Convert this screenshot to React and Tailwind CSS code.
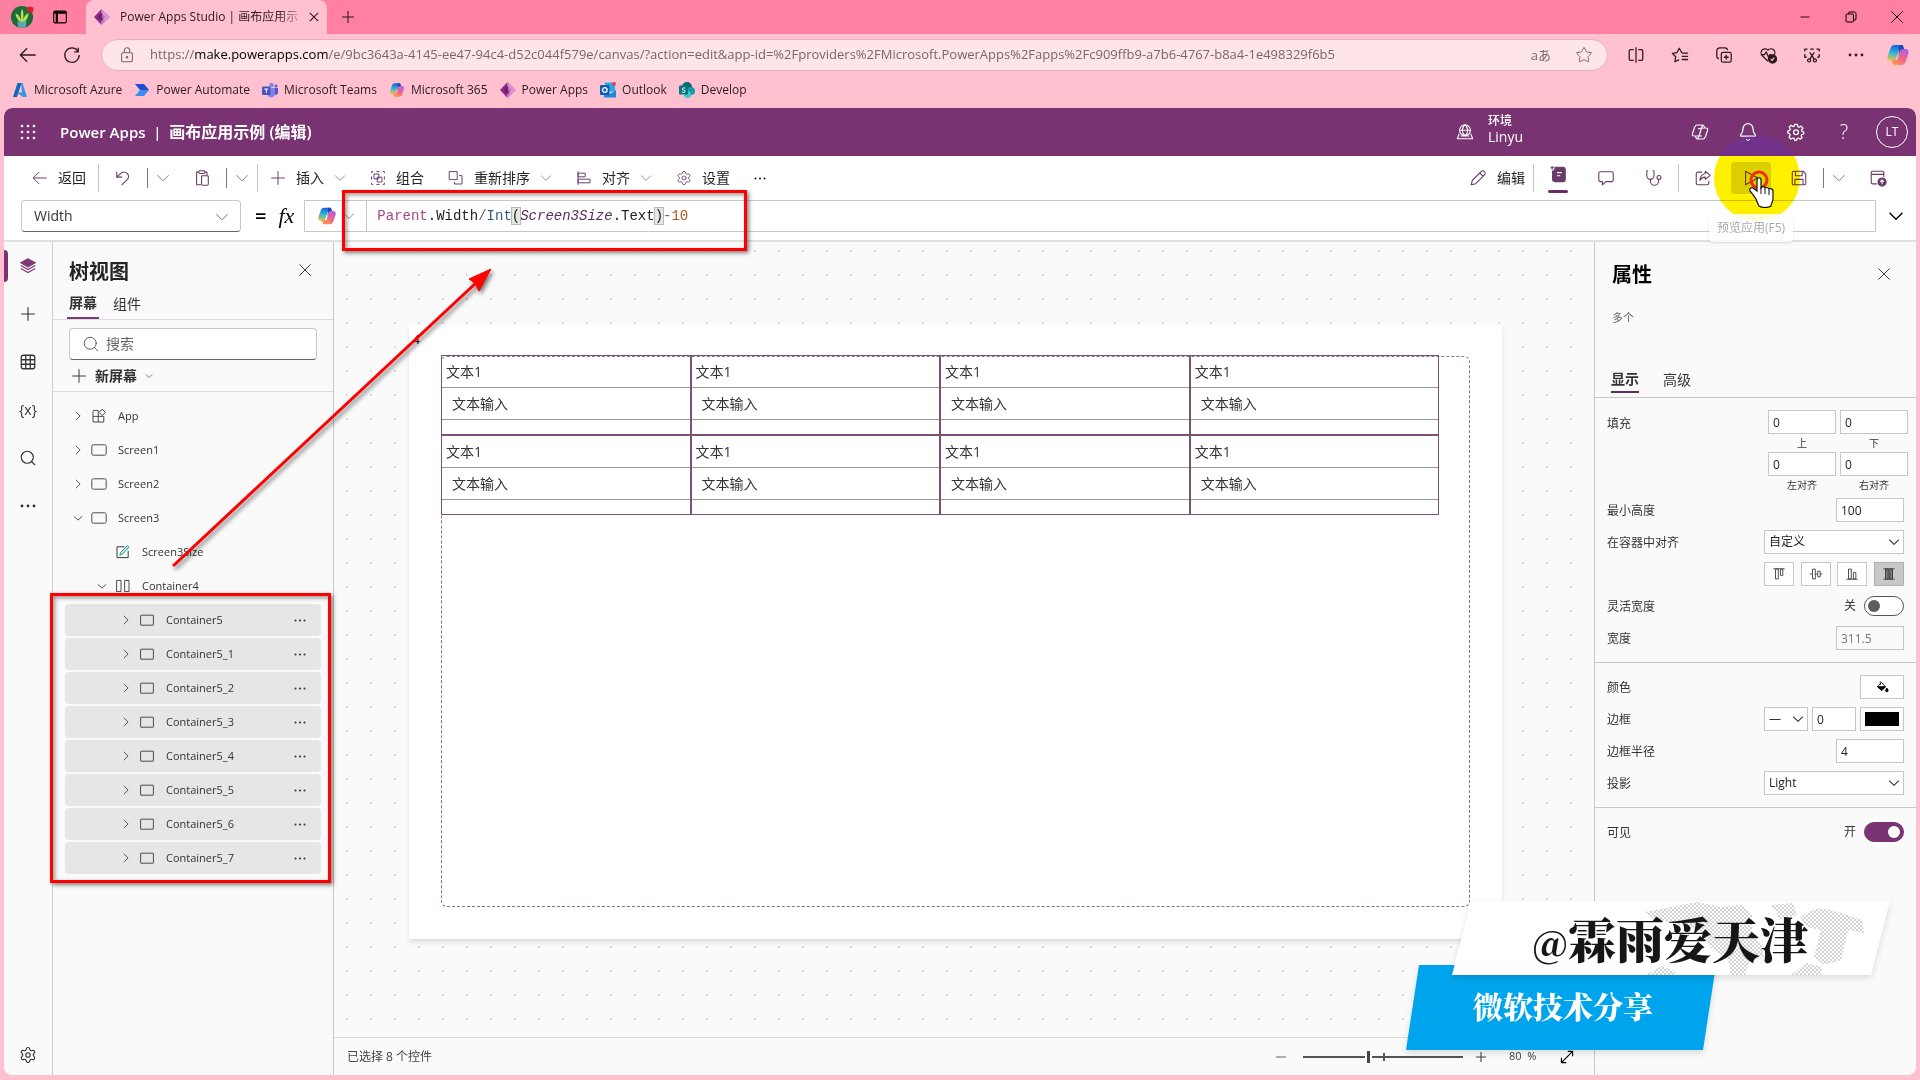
import { useState } from 'react';
import { Bell, Minus, Search, Settings, Star } from 'lucide-react';

const ICONS = {
  back: <path d="M18.500 10h-17M9 2.500 1.500 10 9 17.500" />,
  plus: <path d="M10 1.500v17M1.500 10h17" />,
  close: <path d="m3 3 14 14M17 3 3 17" />,
  down: <path d="m2 6 8 8 8-8" />,
  downSmall: <path d="m4 7.500 6 5.500 6-5.500" />,
  right: <path d="m7 4 6 6-6 6" />,
  tabs: <><rect x="3" y="3.500" width="14" height="13" rx="1.500" /><path d="M3.500 5h13M6.500 5v11" strokeWidth="2.500" /></>,
  reload: <path d="M16.500 5.500A8 8 0 1 0 18 10M17 2v4.500h-4.500" />,
  lock: <><rect x="4" y="7.500" width="12" height="10" rx="1.500" /><path d="M7 7.500V5a3 3 0 0 1 6 0v2.500" /><circle cx="10" cy="12.500" r="0.800" fill="currentColor" /></>,
  split: <path d="M7.500 4H4a1.500 1.500 0 0 0-1.500 1.500v9A1.500 1.500 0 0 0 4 16h3.500M12.500 4H16a1.500 1.500 0 0 1 1.500 1.500v9A1.500 1.500 0 0 1 16 16h-3.500M10 1.500v17" />,
  favorites: <path d="M12 7.500 9.200 2.500 6.500 7.300l-5 .8 3.700 3.900-.8 5.500L9 15.200M12 8h7M12 11.500h7M12 15h7" />,
  collections: <><rect x="7" y="7" width="11" height="11" rx="2" /><path d="M12.500 9.800v5.400M9.800 12.500h5.400M4.500 14A3 3 0 0 1 2 11V5.500A3.500 3.500 0 0 1 5.500 2H11a3 3 0 0 1 3 2.500" /></>,
  heart: <><path d="M10 17 3.500 10.500A4.300 4.300 0 0 1 10 4.500a4.300 4.300 0 0 1 6.500 6M2 9.500h4L8 6.500l2.500 6 1.500-3h2" /><circle cx="15" cy="14.500" r="4.500" fill="currentColor" /><path d="m13 14.500 1.500 1.500 2.500-3" stroke="#ffc0d0" /></>,
  snip: <><path d="M2 6V3.500h3M8 3.500h4M15 3.500h3V6M18 9v3.500M2 9v3.500h2M16 12.500h2M7.500 7l5 7.500M12.500 7l-5 7.500" /><circle cx="6.800" cy="16" r="1.700" /><circle cx="13.200" cy="16" r="1.700" /></>,
  undo: <path d="M3 3v6h6M3.500 8.500 8 4.500a5 5 0 0 1 7 7L8.500 18" />,
  paste: <><path d="M6.500 3.500H4v14h5M13 3.500h2.500V7" /><rect x="6.500" y="2" width="6.500" height="3" rx="1" /><rect x="9.500" y="7.500" width="7.500" height="10.500" rx="1" /></>,
  group: <><rect x="5" y="5" width="6" height="6" /><rect x="9" y="9" width="6" height="6" /><path d="M2 4V2h2M16 2h2v2M18 16v2h-2M4 18H2v-2M2 8v4M18 8v4M8 2h4M8 18h4" /></>,
  reorder: <><rect x="1.500" y="2" width="10" height="10" /><path d="M14 7h3.500v10.500H8V15" /></>,
  align: <><path d="M2.500 1.500v17" /><rect x="2.500" y="4" width="9" height="4.500" /><rect x="2.500" y="11.500" width="15" height="4.500" /></>,
  pencil: <path d="m2.500 17.500 1.200-5L13.500 2.800a2.500 2.500 0 0 1 3.700 3.700L7.500 16.300l-5 1.200ZM12 4.500 15.500 8" />,
  note: <><rect x="4" y="2.500" width="14" height="16" rx="2.500" fill="currentColor" /><path d="M9 8.500h5.500M9 12h3.500" stroke="#fff" /><path d="M3.500 1v5M1 3.500h5" stroke="#fff" strokeWidth="3" /><path d="M3.500 1v4M1.500 3h4" /></>,
  comment: <path d="M3.500 3h13A1.500 1.500 0 0 1 18 4.500v8a1.500 1.500 0 0 1-1.500 1.500H10l-4 3.500V14H3.500A1.500 1.500 0 0 1 2 12.500v-8A1.500 1.500 0 0 1 3.500 3Z" />,
  checker: <><path d="M3.500 2H2v5.500a4 4 0 0 0 8 0V2H8.500M6 11.500v2a4.500 4.500 0 0 0 9 0V12" /><circle cx="15.500" cy="9.500" r="2.200" /></>,
  share: <><path d="M9 3.500H4.500a2 2 0 0 0-2 2v10a2 2 0 0 0 2 2h10a2 2 0 0 0 2-2V13" /><path d="M12.500 2.500 18 7l-5.500 4.500V9C9.500 9 8 10 6.500 12.500 7 8 9 5.500 12.500 5V2.500Z" /></>,
  play: <path d="M4 2.500v15L17.500 10 4 2.500Z" />,
  save: <><path d="M4 2.500h10.500l3 3V16a1.500 1.500 0 0 1-1.500 1.500H4A1.500 1.500 0 0 1 2.500 16V4A1.500 1.500 0 0 1 4 2.500Z" /><path d="M6 2.500v5h7.500v-5M5.500 17.500v-6h9v6" /></>,
  publish: <><path d="M9 16.500H4A1.500 1.500 0 0 1 2.500 15V4A1.500 1.500 0 0 1 4 2.500h11A1.500 1.500 0 0 1 16.500 4v5M2.500 6h14" /><circle cx="14.500" cy="14.500" r="4.500" fill="currentColor" /><path d="M14.500 17v-4.500m-2 1.700 2-2 2 2" stroke="#fff" /></>,
  env: <><circle cx="10" cy="8" r="6" /><path d="M4 8h12M10 2c-4 3-4 9 0 12M10 2c4 3 4 9 0 12M3.500 12 1.500 17.500h17l-2-5.500M5 14.500h10" /></>,
  copilotLine: <path d="M7 3h5.500c1.500 0 1.500 1 2 2.500M7 3C4.500 3 4.500 6 3 10s-.5 4 1.500 4h2M13 17H7.500c-1.500 0-1.500-1-2-2.500M13 17c2.500 0 2.500-3 4-7s.5-4-1.500-4h-2M8 7c2-1 3.500-1 7.500-1M12.500 3 9 14c-.5 1.500-1 3-2 3M4.500 14H12" />,
  gear: <><path d="m8.500 1.500 3 0 .5 2.500 1.500.7L15.700 3.500l2 2.200L16.200 8l.4 1.300 2 .7v2l-2.200.8-.7 1.300 1 2.200-2.200 1.700-2-1.300-1.300.5-.6 2H8.600L8 17.200 6.500 16.600l-2.200 1.200-2-2.100L3.500 13.500 3 12 .9 11V9L3 8.200l.7-1.500L2.500 4.500l2-2L6.700 4 8 3.500Z" /><circle cx="10" cy="10.300" r="2.700" /></>,
  table: <><rect x="2.500" y="2.500" width="15" height="15" rx="2.500" /><path d="M7.500 2.500v15M12.500 2.500v15M2.500 7.500h15M2.500 12.500h15" /></>,
  app: <><path d="M2.500 4v13.500H16V10.500H2.500M9 17.500V3H2.500" /><path d="m14 1.500 4 4-4 4-4-4Z" /></>,
  screen: <rect x="1" y="3.500" width="18" height="13" rx="2" />,
  box: <rect x="2" y="4" width="16" height="12.500" rx="0.500" />,
  columns: <><rect x="2" y="3" width="5.500" height="14" /><rect x="12" y="3" width="5.500" height="14" /></>,
  textInput: <><path d="M16.500 8.500v8.500h-14V3.500H12" stroke="#333" /><path d="m6 14 1-3.500L15.500 2l2 2L9.500 12.500 6 14Z" stroke="#2f8f86" fill="#b8e6e0" /></>,
  expand: <path d="M3 17 17 3M11 3h6v6M3 11v6h6" />,
  alignTop: <><path d="M2 2.500h16" /><rect x="5" y="3" width="4" height="14" /><rect x="12" y="3" width="3.500" height="9" /></>,
  alignMid: <><path d="M1 10h18" /><rect x="5" y="3" width="4" height="14" fill="#fff" /><rect x="12.500" y="6" width="3.500" height="8" fill="#fff" /></>,
  alignBottom: <><path d="M2 17.500h16" /><rect x="5" y="3" width="4" height="14" /><rect x="12" y="8" width="3.500" height="9" /></>,
  alignFill: <><path d="M2 2.500h16M2 17.500h16" /><rect x="5" y="3" width="4" height="14" fill="#777" /><rect x="11" y="3" width="4" height="14" fill="#777" /></>,
  bucket: <><path d="m3.500 9.500 6-6 5.500 6.500-5.500 5Z" /><path d="M3.500 9.500H15L9.500 15Z" fill="currentColor" /><path d="M7.500 2v5" /><path d="M17 11.500c1 1.500 1.800 2.500 1.800 3.500a1.800 1.800 0 0 1-3.600 0c0-1 .8-2 1.800-3.500Z" fill="currentColor" /></>,
};

function Icon({ name, className = 'size-5', weight = 1.2 }) {
  return (
    <svg viewBox="0 0 20 20" className={`shrink-0 ${className}`} fill="none" stroke="currentColor" strokeWidth={weight} strokeLinejoin="round" aria-hidden="true">
      {ICONS[name]}
    </svg>
  );
}

function CopilotLogo({ id, className = 'size-5' }) {
  return (
    <svg viewBox="0 0 24 24" className={`shrink-0 ${className}`} aria-hidden="true">
      <defs>
        <linearGradient id={`${id}-a`} x1="0.500" y1="0" x2="0.300" y2="1">
          <stop offset="0" stopColor="#1b5fd6" />
          <stop offset="0.500" stopColor="#2cb5d8" />
          <stop offset="1" stopColor="#e8c93a" />
        </linearGradient>
        <linearGradient id={`${id}-b`} x1="0.800" y1="0" x2="0.200" y2="1">
          <stop offset="0" stopColor="#b25ce8" />
          <stop offset="0.500" stopColor="#f0648c" />
          <stop offset="1" stopColor="#ff9a4a" />
        </linearGradient>
      </defs>
      <path d="M15.500 2H8.800C6 2 4.800 4 4 6.500L1.800 13c-1 3 .2 5 3 5h2.400c1.500 0 2.300-.8 2.800-2.300L12.800 7h5.400c-.8-3-1.200-5-2.700-5Z" fill={`url(#${id}-a)`} />
      <path d="M8.500 22h6.700c2.800 0 4-2 4.800-4.500l2.200-6.500c1-3-.2-5-3-5h-2.400c-1.500 0-2.300.8-2.800 2.300L11.200 17H5.800c.8 3 1.200 5 2.700 5Z" fill={`url(#${id}-b)`} />
      <path d="M15.500 2c1.500 0 1.900 1.700 2.500 4h-1.200c-1.500 0-2.300.8-2.800 2.300L12.500 13l.8-11Z" fill="#1b49b8" />
    </svg>
  );
}

function PowerAppsLogo({ className = 'size-4' }) {
  return (
    <svg viewBox="0 0 16 16" className={`shrink-0 ${className}`} aria-hidden="true">
      <path d="M7.500 0 0 8l7.500 8Z" fill="#8b2a86" />
      <path d="M7.500 0v16L16 8Z" fill="#c776c2" />
      <path d="M7.500 4 4 8l3.500 4L11 8Z" fill="#6a1d68" />
      <path d="M9 1.500 16 8l-5 4.500L7.500 8Z" fill="#e3a3df" opacity="0.600" />
    </svg>
  );
}

const BOOKMARKS = [
  { label: 'Microsoft Azure', logo: <svg viewBox="0 0 16 16" className="size-4"><path d="M5.500 1h4L5 15H1Z" fill="#1366b8" /><path d="M9 1h1.500L15 15h-4L5 10.500h5Z" fill="#2f9be8" /></svg> },
  { label: 'Power Automate', logo: <svg viewBox="0 0 16 16" className="size-4"><path d="M1 2h9l5 6H6Z" fill="#1c4fd0" /><path d="m6 8-5 6h9l5-6Z" fill="#3c8cf0" /></svg> },
  { label: 'Microsoft Teams', logo: <svg viewBox="0 0 16 16" className="size-4"><circle cx="9.500" cy="3" r="2.200" fill="#7b83eb" /><circle cx="14" cy="4" r="1.500" fill="#5059c9" /><path d="M6 6h7v5a4 4 0 0 1-7 3Z" fill="#7b83eb" /><path d="M13 6h3v4a3 3 0 0 1-3 3Z" fill="#5059c9" /><rect x="0" y="4.500" width="8.500" height="8.500" rx="1" fill="#4b53bc" /><path d="M2.300 7h4M4.300 7v4" stroke="#fff" /></svg> },
  { label: 'Microsoft 365', logo: <CopilotLogo id="m365" className="size-4" /> },
  { label: 'Power Apps', logo: <PowerAppsLogo /> },
  { label: 'Outlook', logo: <svg viewBox="0 0 16 16" className="size-4"><rect x="5" y="0.500" width="10" height="9" fill="#28a8ea" /><path d="M4 8l6 4 6-4v7.500H4Z" fill="#1490df" /><rect x="0" y="3" width="9.500" height="10" rx="1" fill="#0f5fb5" /><circle cx="4.800" cy="8" r="2.300" stroke="#fff" strokeWidth="1.300" fill="none" /><circle cx="14" cy="2" r="2" fill="#e04848" /></svg> },
  { label: 'Develop', logo: <svg viewBox="0 0 16 16" className="size-4"><circle cx="8" cy="5" r="5" fill="#036c70" /><circle cx="12" cy="9" r="4" fill="#1a9ba1" /><circle cx="8.500" cy="12.500" r="3.500" fill="#37c6d0" /><rect x="0" y="3.500" width="9" height="9" rx="1" fill="#03787c" /><path d="M6.300 6.300C5 5.300 3 6 3.200 7.200c.2 1.100 3 .7 3 2S4 11 2.800 9.800" stroke="#fff" fill="none" /></svg> },
];

const CHILDREN = ['Container5', 'Container5_1', 'Container5_2', 'Container5_3', 'Container5_4', 'Container5_5', 'Container5_6', 'Container5_7'];

function Dots({ className = 'h-1 w-4' }) {
  return (
    <svg viewBox="0 0 16 4" className={className} fill="currentColor" aria-hidden="true">
      <circle cx="2" cy="2" r="1.400" />
      <circle cx="8" cy="2" r="1.400" />
      <circle cx="14" cy="2" r="1.400" />
    </svg>
  );
}

function BrowserChrome() {
  return (
    <header className="shrink-0 text-[#2b1a1f]">
      <div className="flex h-[34px] items-center bg-[#ff80a0]">
        <button className="ml-2 grid w-7 place-items-center" aria-label="个人资料">
          <svg viewBox="0 0 26 26" className="size-6">
            <circle cx="13" cy="13" r="12" fill="#1d6b35" />
            <path d="M13 20C8 17 6 12 6 9c3 1 5 4 6 7 0-4-1-8 1-12 2 4 2 8 1 12 1-3 3-6 6-7 0 4-2 9-7 11Z" fill="#b9dc58" />
            <path d="M8 18h10l-1 6a12 12 0 0 1-8 0Z" fill="#5aa9b5" />
            <circle cx="22" cy="5" r="3.500" fill="#d8202c" />
          </svg>
        </button>
        <button className="ml-3 grid w-6 place-items-center text-black" aria-label="标签操作"><Icon name="tabs" className="size-[18px]" /></button>
        <div className="ml-3.5 flex h-full w-[241px] items-center gap-2.5 rounded-t-lg bg-[#ffc0d0] pr-2.5 pl-2">
          <PowerAppsLogo />
          <span className="flex-1 text-xs whitespace-nowrap [mask-image:linear-gradient(to_right,black_88%,rgba(0,0,0,0.3))]">Power Apps Studio | 画布应用示</span>
          <button aria-label="关闭标签页"><Icon name="close" className="size-3" weight={1.8} /></button>
        </div>
        <button className="ml-3.5" aria-label="新建标签页"><Icon name="plus" className="size-3.5" weight={1.5} /></button>
        <div className="ml-auto flex text-black">
          <button className="grid w-[46px] place-items-center" aria-label="最小化"><Minus className="size-3.5" strokeWidth={1.5} /></button>
          <button className="grid w-[46px] place-items-center" aria-label="还原">
            <svg viewBox="0 0 14 14" className="size-3.5" fill="none" stroke="currentColor"><rect x="2" y="4" width="7.500" height="8" rx="1" /><path d="M4.500 4V3a1 1 0 0 1 1-1h5a1.500 1.500 0 0 1 1.500 1.500V9a1 1 0 0 1-1 1h-1" /></svg>
          </button>
          <button className="grid w-[46px] place-items-center" aria-label="关闭"><Icon name="close" className="size-4" /></button>
        </div>
      </div>
      <div className="flex h-[38px] items-center pt-1">
        <button className="ml-[19px]" aria-label="后退"><Icon name="back" className="size-[18px]" weight={1.4} /></button>
        <button className="ml-[26px]" aria-label="刷新"><Icon name="reload" className="size-[18px]" weight={1.4} /></button>
        <div className="relative ml-5 flex h-8 flex-1 items-center rounded-full border border-[#e8b0bf] bg-[#ffe4ea] pl-4 text-[#75686b]">
          <Icon name="lock" className="size-[18px]" />
          <p className="ml-3.5 overflow-hidden text-[13px] whitespace-nowrap">
            https://<span className="text-black">make.powerapps.com</span>/e/9bc3643a-4145-ee47-94c4-d52c044f579e/canvas/?action=edit&amp;app-id=%2Fproviders%2FMicrosoft.PowerApps%2Fapps%2Fc909ffb9-a7b6-4767-b8a4-1e498329f6b5
          </p>
          <input aria-label="地址和搜索栏" className="absolute inset-0 rounded-full bg-transparent px-12 outline-none" />
          <div className="relative ml-auto flex items-center gap-6 pr-3.5">
            <button className="text-[13px] leading-4" aria-label="翻译">aあ</button>
            <button aria-label="收藏此页"><Star className="size-[18px]" strokeWidth={1.25} /></button>
          </div>
        </div>
        <div className="flex items-center pr-0.5 pl-1.5 text-[#2b1a1f]">
          {['split', 'favorites', 'collections', 'heart', 'snip'].map((name) => (
            <button key={name} aria-label={name} className="grid w-11 place-items-center"><Icon name={name} weight={1.4} className="size-[18px]" /></button>
          ))}
          <button aria-label="更多" className="grid w-11 place-items-center"><Dots /></button>
          <button aria-label="Copilot" className="grid w-10 place-items-center"><CopilotLogo id="edge" className="size-6" /></button>
        </div>
      </div>
      <nav className="flex h-9 items-center gap-3 pl-3 text-xs">
        {BOOKMARKS.map((b) => (
          <a key={b.label} href="#" className="flex items-center gap-1.5 whitespace-nowrap">{b.logo}{b.label}</a>
        ))}
      </nav>
    </header>
  );
}

function AppHeader() {
  return (
    <div className="flex h-12 shrink-0 items-center rounded-t-lg bg-[#793372] text-white">
      <button className="ml-4" aria-label="应用启动器">
        <svg viewBox="0 0 16 16" className="size-4" fill="currentColor">
          {[2, 8, 14].map((y) => [2, 8, 14].map((x) => <circle key={`${x}-${y}`} cx={x} cy={y} r="1.300" />))}
        </svg>
      </button>
      <h1 className="ml-6 text-[15px] leading-6 font-semibold whitespace-pre">Power Apps  |  <span className="text-base">画布应用示例 (编辑)</span></h1>
      <button className="ml-auto flex items-center gap-3.5 text-left">
        <Icon name="env" className="size-[18px]" />
        <span className="w-20 pb-1.5">
          <span className="block text-xs leading-4 font-medium">环境</span>
          <span className="block text-sm leading-4">Linyu</span>
        </span>
      </button>
      <div className="ml-[108px] flex items-center pr-2">
        <button className="grid w-12 place-items-center" aria-label="Copilot"><Icon name="copilotLine" /></button>
        <button className="grid w-12 place-items-center" aria-label="通知"><Bell className="size-5" strokeWidth={1.5} /></button>
        <button className="grid w-12 place-items-center" aria-label="设置"><Icon name="gear" className="size-[18px]" weight={1.4} /></button>
        <button className="grid w-12 place-items-center text-xl leading-5 font-light" aria-label="帮助">?</button>
        <button className="ml-2 grid size-8 place-items-center rounded-full border border-white text-xs">LT</button>
      </div>
    </div>
  );
}

const Sep = () => <span className="h-7 w-px shrink-0 bg-[#c8c6c4]" />;

function Command({ icon, label, chevron }) {
  return (
    <button className="flex h-8 items-center gap-2.5 px-3 whitespace-nowrap">
      <span className="text-[#6a3a67]">{icon}</span>
      {label}
      {chevron && <Icon name="down" className="size-3 text-[#666]" />}
    </button>
  );
}

function ClickMarker() {
  return (
    <>
      <span className="pointer-events-none absolute top-1/2 left-1/2 ml-1.5 size-[86px] -translate-1/2 rounded-full bg-[#fff000] mix-blend-multiply [clip-path:inset(21px_0_0_0)]" />
      <span className="pointer-events-none absolute top-1/2 left-1/2 ml-1.5 size-[86px] -translate-1/2 rounded-full bg-[#5a30f0]/20 [clip-path:inset(0_0_65px_0)]" />
      <svg viewBox="0 0 40 48" className="pointer-events-none absolute top-1 left-3.5 z-10 h-12 w-10" aria-hidden="true">
        <circle cx="18" cy="20" r="8" fill="none" stroke="#f03010" strokeWidth="3" />
        <path d="M14 41c-3-4-4-6-6-8-1-2 1-4 3-3l4 3V22c0-3 4-3 4 0v8l1-1c2-1 3 0 3 1 1-1 4 0 4 1 1-1 4 0 4 2v8c0 3-2 4-2 7-3 2-9 2-12 0-1-2-2-4-3-7Z" transform="translate(1 -2)" fill="#fff" stroke="#111" strokeWidth="1.200" />
        <path d="M20 28v6M24 29v5M28 30v5" stroke="#111" />
      </svg>
    </>
  );
}

function CommandBar() {
  const chev = <Icon name="down" className="size-3.5 text-[#666]" />;
  return (
    <div className="flex h-11 shrink-0 items-center bg-white pl-4 text-sm text-[#242424]">
      <Command icon={<Icon name="back" className="size-4" />} label="返回" />
      <Sep />
      <button className="px-[15px] text-[#6a3a67]" aria-label="撤消"><Icon name="undo" className="size-[18px]" /></button>
      <span className="h-5 w-px bg-[#777]" />
      <button className="grid w-[30px] place-items-center" aria-label="撤消选项">{chev}</button>
      <button className="px-[15px] text-[#6a3a67]" aria-label="粘贴"><Icon name="paste" className="size-[18px]" /></button>
      <span className="h-5 w-px bg-[#777]" />
      <button className="grid w-[30px] place-items-center" aria-label="粘贴选项">{chev}</button>
      <Sep />
      <Command icon={<Icon name="plus" className="size-4" />} label="插入" chevron />
      <Command icon={<Icon name="group" className="size-4" />} label="组合" />
      <Command icon={<Icon name="reorder" className="size-4" />} label="重新排序" chevron />
      <Command icon={<Icon name="align" className="size-4" />} label="对齐" chevron />
      <Command icon={<Settings className="size-4" strokeWidth={1.25} />} label="设置" />
      <button className="px-3" aria-label="更多命令"><Dots className="h-[3px] w-3" /></button>

      <div className="ml-auto flex h-full items-center pr-3.5 text-[#6a3a67]">
        <button className="flex items-center gap-2.5 px-2 text-[#242424]">
          <Icon name="pencil" className="size-[18px] text-[#6a3a67]" />编辑
        </button>
        <Sep />
        <button className="relative grid h-full w-12 place-items-center" aria-label="版本说明">
          <Icon name="note" className="mb-2 size-[18px]" />
          <span className="absolute bottom-[7px] h-[3px] w-5 rounded bg-[#6b2d68]" />
        </button>
        <button className="grid w-12 place-items-center" aria-label="注释"><Icon name="comment" className="size-[18px]" /></button>
        <button className="grid w-12 place-items-center" aria-label="应用检查器"><Icon name="checker" className="size-[18px]" /></button>
        <Sep />
        <button className="grid w-12 place-items-center" aria-label="共享"><Icon name="share" className="size-[18px]" /></button>
        <div className="relative grid h-full w-12 place-items-center">
          <button className="grid h-8 w-10 place-items-center rounded bg-[#dcdcdc]" aria-label="预览应用"><Icon name="play" className="size-[18px]" /></button>
          <ClickMarker />
          <span role="tooltip" className="absolute top-[58px] z-10 rounded bg-white/85 px-2 py-1 text-xs leading-5 whitespace-nowrap text-[#aaa] shadow-sm">预览应用(F5)</span>
        </div>
        <button className="grid w-12 place-items-center" aria-label="保存"><Icon name="save" className="size-[18px]" /></button>
        <span className="h-5 w-px bg-[#777]" />
        <button className="grid w-[30px] place-items-center" aria-label="保存选项">{chev}</button>
        <button className="grid w-12 place-items-center" aria-label="发布"><Icon name="publish" className="size-[18px]" /></button>
      </div>
    </div>
  );
}

function FormulaBar() {
  return (
    <div className="flex shrink-0 items-center border-b-2 border-[#e0e0e0] bg-white pb-2 pl-[17px]">
      <div className="relative w-[220px]">
        <select aria-label="属性" className="h-8 w-full appearance-none rounded border border-[#c8c8c8] border-b-[#666] bg-white pl-3 text-sm text-[#333]">
          <option>Width</option>
        </select>
        <Icon name="down" className="pointer-events-none absolute top-2.5 right-3 size-3.5 text-[#555]" />
      </div>
      <span className="ml-3.5 text-xl leading-6 font-semibold">=</span>
      <span className="ml-3 font-['Liberation_Serif',serif] text-[22px] leading-6 italic">fx</span>
      <div className="ml-2.5 flex h-8 flex-1 items-center border border-[#c8c8c8]">
        <button className="flex h-full w-[62px] items-center gap-1.5 border-r border-[#c8c8c8] pl-3" aria-label="Copilot 选项">
          <CopilotLogo id="formula" />
          <Icon name="down" className="size-3 text-[#666]" />
        </button>
        <div className="relative flex h-full flex-1 items-center pl-2.5 font-['Liberation_Mono',monospace] text-sm leading-5 text-[#222]">
          <code className="font-[inherit] whitespace-nowrap">
            <span className="text-[#a8487f]">Parent</span>.Width<span className="text-[#666]">/</span><span className="text-[#2a5a8c]">Int</span><span className="bg-[#e3e8e3] outline outline-[#b5bbb5]">(</span><span className="text-[#5c2d5a] italic">Screen3Size</span>.Text<span className="bg-[#e3e8e3] outline outline-[#b5bbb5]">)</span><span className="text-[#666]">-</span><span className="text-[#a8581c]">10</span>
          </code>
          <input aria-label="公式" className="absolute inset-0 bg-transparent px-2.5 outline-none" />
        </div>
      </div>
      <button className="grid w-10 place-items-center text-black" aria-label="展开公式栏"><Icon name="down" className="size-4" weight={1.8} /></button>
    </div>
  );
}

function Rail() {
  const items = [
    { label: '插入', icon: <Icon name="plus" className="size-4" weight={1.4} /> },
    { label: '数据', icon: <Icon name="table" className="size-[18px]" weight={1.4} /> },
    { label: '变量', icon: <span className="text-sm leading-5">{'{x}'}</span> },
    { label: '搜索', icon: <Search className="size-[18px]" strokeWidth={1.5} /> },
    { label: '更多', icon: <Dots /> },
  ];
  return (
    <nav className="flex w-[49px] shrink-0 flex-col items-center gap-4 border-r border-[#d0d0d0] pt-2 pb-1 text-[#333]">
      <button className="relative grid h-8 w-full place-items-center text-[#7d3a7a]" aria-label="树视图">
        <span className="absolute left-0 h-8 w-1 rounded-r bg-[#793372]" />
        <svg viewBox="0 0 20 20" className="size-[18px]" fill="none" stroke="currentColor" strokeWidth="1.300">
          <path d="M10 2 2 6.500l8 4.500 8-4.500Z" fill="currentColor" />
          <path d="m2 9.500 8 4.500 8-4.500M2 12.800l8 4.500 8-4.500" />
        </svg>
      </button>
      {items.map((item) => (
        <button key={item.label} aria-label={item.label} className="grid h-8 w-full place-items-center">{item.icon}</button>
      ))}
      <button aria-label="设置" className="mt-auto grid h-8 w-full place-items-center"><Settings className="size-[18px]" strokeWidth={1.5} /></button>
    </nav>
  );
}

const INDENT = { 1: 'pl-1.5', 2: 'pl-[30px]', 3: 'pl-[54px]' };

function TreeRow({ name, icon, level = 1, state, selected }) {
  return (
    <li className={`flex h-8 items-center rounded ${INDENT[level]} ${selected ? 'bg-[#e6e6e6]' : ''}`}>
      {state ? (
        <button aria-label={`切换 ${name}`}><Icon name={state === 'open' ? 'downSmall' : 'right'} className="size-3.5 text-[#555]" weight={1.4} /></button>
      ) : (
        <span className="w-3.5" />
      )}
      <Icon name={icon} className="ml-1.5 size-4 text-[#444]" />
      <span className="ml-[11px]">{name}</span>
      {selected && <button className="mr-3.5 ml-auto" aria-label={`${name} 更多操作`}><Dots className="h-[3px] w-3.5" /></button>}
    </li>
  );
}

function TreeView() {
  return (
    <aside className="flex w-[281px] shrink-0 flex-col border-r border-[#c8c8c8] text-[#333]">
      <div className="mt-3.5 flex h-8 items-center justify-between pr-5 pl-4">
        <h2 className="text-xl leading-7 font-bold text-[#242424]">树视图</h2>
        <button className="pb-1" aria-label="关闭树视图"><Icon name="close" className="size-4" /></button>
      </div>
      <div role="tablist" className="flex h-8 gap-3 border-b border-[#dcdcdc] pl-3.5 text-sm leading-7">
        <button role="tab" className="border-b-2 border-[#7d3a7a] px-0.5 font-bold">屏幕</button>
        <button role="tab" className="px-0.5">组件</button>
      </div>
      <div className="mt-2 mr-4 ml-4 flex h-8 shrink-0 items-center gap-1.5 rounded border border-[#c8c8c8] border-b-[#666] bg-white pl-3">
        <Search className="size-[18px] shrink-0 text-[#555]" strokeWidth={1.25} />
        <input aria-label="搜索" placeholder="搜索" className="w-full bg-transparent text-sm outline-none placeholder:text-[#666]" />
      </div>
      <div className="flex h-8 shrink-0 items-center border-b border-[#dcdcdc] pl-[18px]">
        <button className="flex items-center gap-2 text-sm font-semibold">
          <Icon name="plus" className="size-4" />新屏幕<Icon name="down" className="size-2 text-[#666]" weight={2} />
        </button>
      </div>
      <ul className="flex flex-col gap-0.5 px-3 pt-2 text-[11px]">
        <TreeRow name="App" icon="app" state="closed" />
        <TreeRow name="Screen1" icon="screen" state="closed" />
        <TreeRow name="Screen2" icon="screen" state="closed" />
        <TreeRow name="Screen3" icon="screen" state="open" />
        <TreeRow name="Screen3Size" icon="textInput" level={2} />
        <TreeRow name="Container4" icon="columns" level={2} state="open" />
        {CHILDREN.map((name) => (
          <TreeRow key={name} name={name} icon="box" level={3} state="closed" selected />
        ))}
      </ul>
    </aside>
  );
}

function Cell() {
  return (
    <div className="h-20 border border-[#7a5277] text-sm text-[#333]">
      <p className="h-8 border-b border-[#999] pl-1 leading-8">文本1</p>
      <p className="h-8 border-b border-[#999] pl-2.5 leading-8">文本输入</p>
    </div>
  );
}

function Canvas() {
  const [zoom, setZoom] = useState(41);
  return (
    <main className="flex min-w-0 flex-1 flex-col">
      <div className="min-h-0 flex-1 overflow-hidden bg-[radial-gradient(circle,#dcdcdc_1px,transparent_1px)] bg-[size:24px_24px] bg-[position:1px_-3px] pt-[82px] pr-[92px] pl-[75px]">
        <section className="relative flex aspect-[1093/615] w-full flex-col bg-white p-8 shadow-md">
          <span className="absolute top-2 left-1 text-xs leading-4">4</span>
          <div className="flex-1 rounded-md border border-dashed border-[#8a7088]">
            <div className="-mt-0.5 -ml-px grid w-[calc(97%+2px)] grid-cols-4">
              {CHILDREN.map((name) => <Cell key={name} />)}
            </div>
          </div>
        </section>
      </div>
      <footer className="flex h-[38px] shrink-0 items-center border-t border-[#dcdcdc] bg-[#fafafa] pr-[19px] pl-[13px] text-xs text-[#444]">
        <span>已选择 8 个控件</span>
        <button className="ml-auto" aria-label="缩小"><Minus className="size-4" strokeWidth={1.25} /></button>
        <div className="relative ml-3.5 flex w-40 items-center">
          <input
            type="range"
            aria-label="缩放"
            value={zoom}
            onChange={(e) => setZoom(Number(e.target.value))}
            className="h-4 w-full appearance-none bg-transparent [&::-webkit-slider-runnable-track]:h-0.5 [&::-webkit-slider-runnable-track]:bg-[#555] [&::-webkit-slider-thumb]:-mt-[5px] [&::-webkit-slider-thumb]:h-3 [&::-webkit-slider-thumb]:w-[3px] [&::-webkit-slider-thumb]:appearance-none [&::-webkit-slider-thumb]:bg-[#444] [&::-webkit-slider-thumb]:shadow-[0_0_0_2px_#fafafa]"
          />
          <span className="pointer-events-none absolute left-1/2 h-2 w-0.5 bg-[#555]" />
        </div>
        <button className="ml-3" aria-label="放大"><Icon name="plus" className="size-3" weight={1.8} /></button>
        <span className="ml-[22px] w-[34px] text-[11px] whitespace-pre">80  %</span>
        <button className="ml-4" aria-label="适应窗口"><Icon name="expand" className="size-4 text-black" weight={1.4} /></button>
      </footer>
    </main>
  );
}

const FIELD = 'h-6 border border-[#c8c6c4] bg-white px-1 text-xs text-[#222]';

function Row({ label, id, children }) {
  return (
    <div className="flex h-8 items-center gap-1 pr-3 pl-3">
      <label htmlFor={id} className="mr-auto pt-0.5">{label}</label>
      {children}
    </div>
  );
}

function Dropdown({ id, value }) {
  return (
    <div className="relative w-[140px]">
      <select id={id} className={`${FIELD} w-full appearance-none`}>
        <option>{value}</option>
      </select>
      <Icon name="down" className="pointer-events-none absolute top-1.5 right-1 size-3" weight={1.8} />
    </div>
  );
}

function Toggle({ id, text, initial }) {
  const [on, setOn] = useState(initial);
  return (
    <>
      <span className="mr-1">{text}</span>
      <input
        id={id}
        type="checkbox"
        checked={on}
        onChange={() => setOn(!on)}
        className="flex h-5 w-10 appearance-none items-center rounded-full border border-[#555] bg-white px-[3px] before:size-3 before:rounded-full before:bg-[#5c5c5c] checked:justify-end checked:border-[#793372] checked:bg-[#793372] checked:before:bg-white"
      />
    </>
  );
}

function PaddingField({ id, label }) {
  return (
    <div className="flex flex-col">
      <input id={id} defaultValue="0" className={`${FIELD} w-[68px]`} />
      <label htmlFor={id} className="h-[18px] text-center text-[10px] leading-[18px]">{label}</label>
    </div>
  );
}

function Properties() {
  const aligns = [
    { icon: 'alignTop', label: '顶部' },
    { icon: 'alignMid', label: '居中' },
    { icon: 'alignBottom', label: '底部' },
  ];
  return (
    <aside className="w-[322px] shrink-0 overflow-hidden border-l border-[#c8c8c8] text-xs text-[#333]">
      <div className="flex h-16 items-center justify-between pr-6 pl-[17px]">
        <h2 className="pt-0.5 text-xl leading-7 font-bold text-black">属性</h2>
        <button aria-label="关闭属性"><Icon name="close" className="size-4" /></button>
      </div>
      <p className="h-[60px] pt-1 pl-[17px] text-[11px] leading-4 text-[#666]">多个</p>
      <div role="tablist" className="flex h-8 gap-6 border-b border-[#c8c8c8] pb-1 pl-4 text-sm leading-6">
        <button role="tab" className="border-b-2 border-[#5c2d5a] font-semibold">显示</button>
        <button role="tab">高级</button>
      </div>
      <div className="flex justify-between pt-3 pr-2 pl-3">
        <span className="leading-7">填充</span>
        <div className="grid grid-cols-2 gap-x-1">
          <PaddingField id="pad-top" label="上" />
          <PaddingField id="pad-bottom" label="下" />
          <PaddingField id="pad-left" label="左对齐" />
          <PaddingField id="pad-right" label="右对齐" />
        </div>
      </div>
      <Row label="最小高度" id="min-height"><input id="min-height" defaultValue="100" className={`${FIELD} w-[68px]`} /></Row>
      <Row label="在容器中对齐" id="align-self"><Dropdown id="align-self" value="自定义" /></Row>
      <div className="flex h-8 items-center justify-between pr-3 pl-[169px]">
        {aligns.map((a) => (
          <button key={a.icon} aria-label={a.label} className="grid h-6 w-[30px] place-items-center border border-[#c8c6c4] bg-white"><Icon name={a.icon} className="size-3.5" /></button>
        ))}
        <button aria-label="拉伸" className="grid h-6 w-[30px] place-items-center border border-[#b0b0b0] bg-[#c8c8c8]"><Icon name="alignFill" className="size-3.5" /></button>
      </div>
      <Row label="灵活宽度" id="flex-width"><Toggle id="flex-width" text="关" initial={false} /></Row>
      <Row label="宽度" id="width"><input id="width" disabled defaultValue="311.5" className="h-6 w-[68px] border border-[#c8c6c4] bg-[#fafafa] px-1 text-xs text-[#777]" /></Row>
      <hr className="my-2 border-[#c8c8c8]" />
      <Row label="颜色" id="fill-color">
        <button id="fill-color" className="grid h-6 w-11 place-items-center border border-[#c8c6c4] bg-white text-black"><Icon name="bucket" className="size-3.5" /></button>
      </Row>
      <Row label="边框" id="border-width">
        <div className="relative">
          <select aria-label="边框样式" className={`${FIELD} w-11 appearance-none`}><option>—</option></select>
          <Icon name="down" className="pointer-events-none absolute top-1.5 right-1 size-3" weight={1.8} />
        </div>
        <input id="border-width" defaultValue="0" className={`${FIELD} w-11`} />
        <button aria-label="边框颜色" className="h-6 w-11 border border-[#c8c6c4] bg-white p-1"><span className="block h-full bg-black" /></button>
      </Row>
      <Row label="边框半径" id="radius"><input id="radius" defaultValue="4" className={`${FIELD} w-[68px]`} /></Row>
      <Row label="投影" id="shadow"><Dropdown id="shadow" value="Light" /></Row>
      <hr className="my-2 border-[#c8c8c8]" />
      <Row label="可见" id="visible"><Toggle id="visible" text="开" initial /></Row>
    </aside>
  );
}

function Annotations() {
  const box = 'pointer-events-none absolute border-[3px] border-[#ff0000] shadow-[2px_2px_4px_rgba(0,0,0,0.5),inset_2px_2px_4px_rgba(0,0,0,0.4)]';
  return (
    <>
      <div className={`${box} top-[190px] left-[342px] h-[61px] w-[405px]`} />
      <div className={`${box} top-[593px] left-[50px] h-[290px] w-[281px]`} />
      <svg viewBox="0 0 330 310" className="pointer-events-none absolute top-[264px] left-[168px] h-[310px] w-[330px] drop-shadow-[2px_3px_2px_rgba(0,0,0,0.5)]" aria-hidden="true">
        <path d="M5 302 310 17" stroke="#ff0000" strokeWidth="3" />
        <path d="m323 5-22 10 6 4 4 8Z" fill="#ff0000" stroke="#ff0000" />
      </svg>
    </>
  );
}

function ChannelBanner() {
  return (
    <div className="pointer-events-none absolute right-[30px] bottom-[30px] h-[149px] w-[484px] font-['Noto_Serif_CJK_SC','Noto_Sans_CJK_SC',serif] font-black">
      <div className="absolute bottom-0 left-0 drop-shadow-md">
        <p className="h-[85px] w-[310px] bg-[#00a4ec] pl-[67px] text-3xl leading-20 text-white [clip-path:polygon(13px_0,100%_0,calc(100%_-_13px)_100%,0_100%)]">微软技术分享</p>
      </div>
      <div className="absolute top-0 right-0 drop-shadow-md">
        <div className="relative h-[74px] w-[438px] bg-white [clip-path:polygon(19px_0,100%_0,calc(100%_-_19px)_100%,0_100%)]">
          <svg viewBox="0 0 438 74" className="absolute inset-0" aria-hidden="true">
            <defs>
              <pattern id="map-dots" width="4" height="4" patternUnits="userSpaceOnUse">
                <circle cx="1" cy="1" r="1" fill="#c2c2c2" />
                <circle cx="3" cy="3" r="1" fill="#c2c2c2" />
              </pattern>
            </defs>
            <path fill="url(#map-dots)" d="M193 11 214 7 245 1l24 5 21-2 10 10v15l10 17 2 10-14 3-5 15h-14l-3-15-18-13-10-17-27-7-21-5ZM319 4l22-2 4 12-18 5-3-8ZM348 16l17-9 14 2 31 10 2 13-16-3-7 30-17 5-10-8 7-27-14-3ZM193 74l17-9 14 6-3 3ZM339 74l16-12 15 4-1 8Z" />
          </svg>
          <p className="relative pl-[80px] text-5xl leading-[74px] text-[#161616]"><span className="text-4xl">@</span>霖雨爱天津</p>
        </div>
      </div>
    </div>
  );
}

export default function App() {
  return (
    <div className="relative flex h-screen flex-col overflow-hidden bg-[#ffc0d0] font-['Open_Sans','Noto_Sans_CJK_SC',sans-serif]">
      <BrowserChrome />
      <div className="mx-1 mb-[5px] flex min-h-0 flex-1 flex-col overflow-hidden rounded-lg bg-[#fafafa]">
        <AppHeader />
        <CommandBar />
        <FormulaBar />
        <div className="flex min-h-0 flex-1">
          <Rail />
          <TreeView />
          <Canvas />
          <Properties />
        </div>
      </div>
      <Annotations />
      <ChannelBanner />
    </div>
  );
}
